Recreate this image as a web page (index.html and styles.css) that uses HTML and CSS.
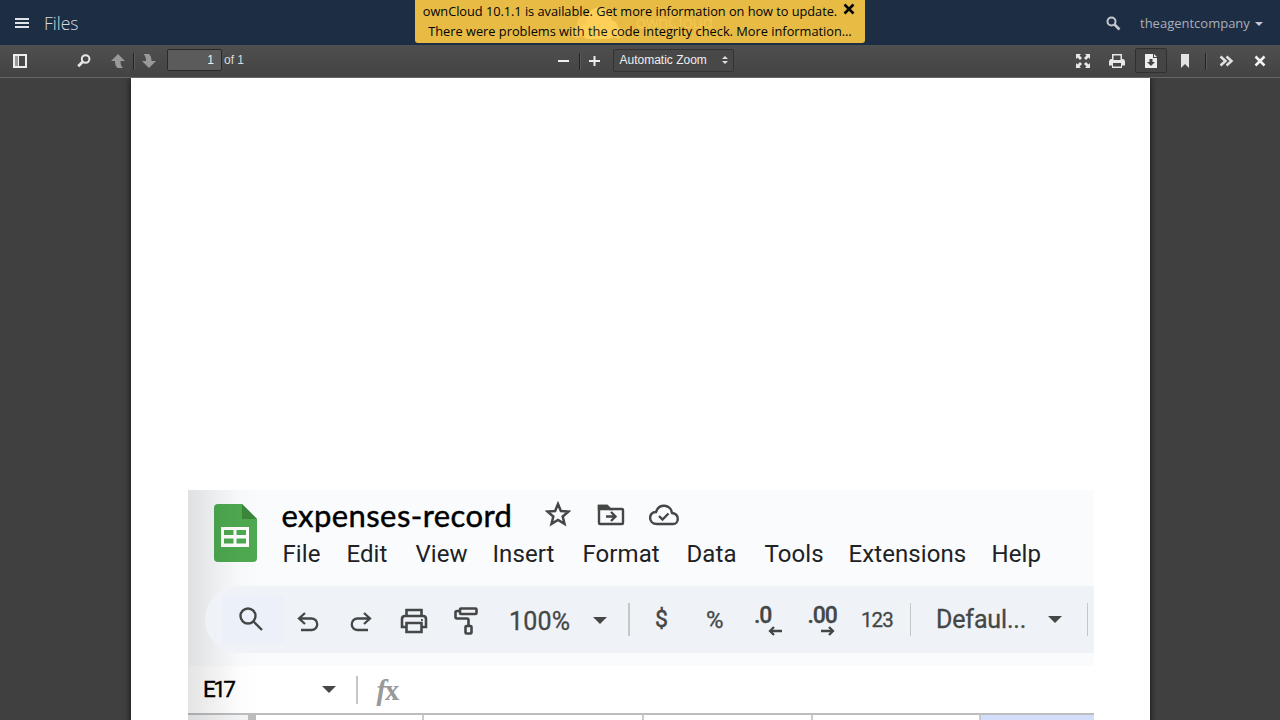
FILE: index.html
```html
<!DOCTYPE html>
<html lang="en">
<head>
<meta charset="utf-8">
<title>Files - ownCloud</title>
<link rel="stylesheet" href="styles.css">
</head>
<body>
<header class="topbar">
  <div class="topbar-left">
    <svg class="burger" width="14" height="10" viewBox="0 0 14 10" fill="#dfe3e8"><path d="M0 0h14v2H0zM0 4h14v2H0zM0 8h14v2H0z"/></svg>
    <span class="app-name">Files</span>
  </div>
  <div class="brand">
    <svg width="54" height="34" viewBox="0 0 54 34" fill="#fff"><g opacity=".75"><circle cx="7" cy="26" r="6"/><circle cx="14" cy="17" r="7"/><circle cx="48" cy="27" r="5.500"/></g><circle cx="29" cy="14" r="12.500"/><circle cx="19" cy="25" r="8"/><circle cx="39" cy="23" r="9.500"/><rect x="16" y="22" width="26" height="11" rx="4"/></svg>
    <span class="brand-name">ownCloud</span>
  </div>
  <div class="topbar-right">
    <svg class="top-search" width="15" height="15" viewBox="0 0 15 15" fill="none" stroke="#c3c8cf"><circle cx="5.500" cy="5.500" r="4" stroke-width="2"/><path d="M8.500 8.500l5 5" stroke-width="2.600"/></svg>
    <span class="user">theagentcompany</span>
    <span class="caret"></span>
  </div>
  <div class="notice">
    <div class="notice-row first">ownCloud 10.1.1 is available. Get more information on how to update.<svg class="notice-close" width="12" height="12" viewBox="0 0 12 12" stroke="#000" stroke-width="2.600"><path d="M1.500 1.500l9 9M10.500 1.500l-9 9"/></svg></div>
    <div class="notice-row">There were problems with the code integrity check. More information…</div>
  </div>
</header>
<nav class="toolbar">
  <div class="tools tools-left">
    <svg class="i-side" width="16" height="16" viewBox="0 0 16 16"><path d="M1 1h14v14H1zM3 3v10h10V3z" fill="#eee" fill-rule="evenodd"/><path d="M3 3h3v10H3z" fill="#999"/><path d="M6 3h1v10H6z" fill="#eee"/></svg>
    <svg class="i-find" width="16" height="16" viewBox="0 0 16 16" fill="none" stroke="#e6e6e6"><circle cx="9.600" cy="6" r="3.800" stroke-width="2"/><path d="M7 8.500L2.200 13.200" stroke-width="2.800"/></svg>
    <svg class="i-up" width="16" height="16" viewBox="0 0 16 16" fill="#999"><path d="M8 1L1 8h4c0 3 .5 5 2.500 7H13c-2-2-2.500-4-2.500-7H15z"/></svg>
    <span class="sep"></span>
    <svg class="i-down" width="16" height="16" viewBox="0 0 16 16" fill="#999"><path d="M8 15L1 8h4c0-3-.5-5-2.500-7H8c2 2 2.500 4 2.500 7H15z"/></svg>
    <span class="page-no">1</span><span class="page-of">of 1</span>
  </div>
  <div class="tools">
    <svg width="16" height="16" viewBox="0 0 16 16" fill="#eee"><path d="M3 7h11v2H3z"/></svg>
    <span class="sep zoom-sep"></span>
    <svg class="i-plus" width="16" height="16" viewBox="0 0 16 16" fill="#eee"><path d="M2 7h4.500V3h2v4H13v2H8.500v4h-2V9H2z"/></svg>
    <span class="scale">Automatic Zoom<svg width="6" height="8" viewBox="0 0 6 8" fill="#ddd"><path d="M0 3l3-3 3 3zM0 5h6L3 8z"/></svg></span>
  </div>
  <div class="tools tools-right">
    <svg width="16" height="16" viewBox="0 0 16 16" fill="#e8e8e8"><path d="M1 1h5L4.500 2.500 7 5 5 7 2.500 4.500 1 6zM15 1v5l-1.500-1.500L11 7 9 5l2.500-2.500L10 1zM1 15v-5l1.500 1.500L5 9l2 2-2.500 2.500L6 15zM15 15h-5l1.500-1.500L9 11l2-2 2.500 2.500L15 10z"/></svg>
    <svg width="16" height="16" viewBox="0 0 16 16"><path d="M3 1h10v5h1.500L16 8v4.500h-3V15H3v-2.500H0V8l1.500-2H3zM4.500 2.500V7h7V2.500zM4 10v3.500h8V10z" fill="#e8e8e8" fill-rule="evenodd"/></svg>
    <span class="boxed"><svg width="16" height="16" viewBox="0 0 16 16"><path d="M2 1h8v4h4v10H2zM11 1l3 3h-3zM6.500 6v3H4l4 4 4-4H9.500V6z" fill="#eee" fill-rule="evenodd"/></svg></span>
    <svg width="16" height="16" viewBox="0 0 16 16" fill="#e2e2e2"><path d="M4 1h8v14l-4-4-4 4z"/></svg>
    <span class="sep"></span>
    <svg width="16" height="16" viewBox="0 0 16 16" fill="none" stroke="#e2e2e2" stroke-width="2.500"><path d="M1.500 3.500l5 4.500-5 4.500M7.500 3.500l5 4.500-5 4.500"/></svg>
    <svg class="i-close" width="16" height="16" viewBox="0 0 16 16" stroke="#f2f2f2" stroke-width="2.500"><path d="M2.500 3.500l9 9M11.500 3.500l-9 9"/></svg>
  </div>
</nav>
<main class="viewer">
  <section class="page">
    <article class="sheet">
      <div class="sheet-head">
        <svg class="sheet-logo" width="43" height="58" viewBox="0 0 43 58"><path d="M4 0h24l15 15v39a4 4 0 0 1-4 4H4a4 4 0 0 1-4-4V4a4 4 0 0 1 4-4z" fill="#4ea950"/><path d="M28 0l15 15H28z" fill="#3b8539"/><path d="M7 23h28v20H7zM10 26v5h9.500v-5zM22.500 26v5H32v-5zM10 34.500v5h9.500v-5zM22.500 34.500v5H32v-5z" fill="#fff" fill-rule="evenodd"/></svg>
        <div class="sheet-info">
          <div class="title-row">
            <span class="title">expenses-record</span>
            <svg class="i-star" width="26" height="26" viewBox="0 0 26 26" fill="none" stroke="#444746" stroke-width="2.500"><path d="M13 3l2.900 7 7.500.6-5.700 4.900 1.800 7.400-6.500-4-6.500 4 1.800-7.400-5.700-4.900 7.500-.6z"/></svg>
            <svg class="i-folder" width="28" height="22" viewBox="0 0 28 22" fill="none" stroke="#444746" stroke-width="2.400"><path d="M2 2h8l3 3h12q1 0 1 1v13q0 1-1 1H3q-1 0-1-1z"/><path d="M2 2h8l3 3H2z" fill="#444746"/><path d="M9 12.500h9M14 8l4.500 4.500L14 17"/></svg>
            <svg class="i-cloud" width="30" height="22" viewBox="0 0 30 22" fill="none" stroke="#444746" stroke-width="2.400"><path d="M8 20c-9 0-9-12-1-12C10-1 22 0 23 9c8 1 7 11 1 11z"/><path d="M10 12l3.500 3.500 6-6"/></svg>
          </div>
          <div class="menu"><span>File</span><span>Edit</span><span>View</span><span>Insert</span><span>Format</span><span>Data</span><span>Tools</span><span>Extensions</span><span>Help</span></div>
        </div>
      </div>
      <div class="pill">
        <div class="search-cell"><svg width="26" height="26" viewBox="0 0 26 26" fill="none" stroke="#444746" stroke-width="2.400"><circle cx="10" cy="10" r="7.500"/><path d="M15.500 15.500l8.500 8.500"/></svg></div>
        <svg class="i-undo" width="22" height="20" viewBox="0 0 22 20" fill="none" stroke="#444746" stroke-width="2.300"><path d="M8 1L2 6.500 8 12M2 6.500h12.500a5.700 5.700 0 0 1 0 11.500H4"/></svg>
        <svg class="i-redo" width="22" height="20" viewBox="0 0 22 20" fill="none" stroke="#444746" stroke-width="2.300"><path d="M14 1l6 5.500-6 5.500M20 6.500H7.500a5.700 5.700 0 0 0 0 11.500H18"/></svg>
        <svg class="i-print" width="28" height="26" viewBox="0 0 28 26" fill="none" stroke="#444746" stroke-width="2.600"><path d="M6.500 8V2h15v6M6.500 19H2v-8q0-3 3-3h18q3 0 3 3v8h-4.500M6.500 15h15v9h-15z"/><path d="M21 12h1.800" stroke-width="1.800"/></svg>
        <svg class="i-paint" width="24" height="28" viewBox="0 0 24 28" fill="none" stroke="#444746" stroke-width="2.600"><rect x="6" y="1.500" width="16.500" height="5.500" rx="1"/><path d="M6 4H3q-1.500 0-1.500 1.500V10q0 1.500 1.500 1.500h10q1.500 0 1.500 1.500v6"/><rect x="11.500" y="19" width="6" height="7.500" rx="1"/></svg>
        <span class="percent">100%</span><i class="arrow a-zoom"></i><i class="bar"></i>
        <span class="dollar">$</span><span class="pct">%</span>
        <span class="dec"><b>.0</b><svg width="14" height="10" viewBox="0 0 14 10" fill="none" stroke="#444746" stroke-width="2.300"><path d="M14 5H2M6 1L2 5l4 4"/></svg></span>
        <span class="dec"><b>.00</b><svg width="14" height="10" viewBox="0 0 14 10" fill="none" stroke="#444746" stroke-width="2.300"><path d="M0 5h12M8 1l4 4-4 4"/></svg></span>
        <span class="num">123</span><i class="bar"></i>
        <span class="font">Defaul...</span><i class="arrow"></i><i class="bar b-three"></i>
      </div>
      <div class="formula"><span class="cell-ref">E17</span><i class="arrow"></i><i class="bar b-fx"></i><span class="fx"><em>f</em>x</span></div>
      <div class="cols"><span class="corner"></span><span></span><span></span><span></span><span></span><span class="selected"></span></div>
    </article>
  </section>
</main>
</body>
</html>
```
FILE: styles.css
```css
* { box-sizing: border-box; }
body { margin: 0; width: 1280px; height: 720px; overflow: hidden; display: flex; flex-direction: column; font-family: "Open Sans", sans-serif; background: #404040; }
svg { display: block; flex: none; }

.topbar { position: relative; height: 45px; flex: none; display: grid; grid-template-columns: 570px 1fr 174px; align-items: center; background: #1d2d44; }
.topbar-left { display: flex; align-items: center; padding-left: 15px; }
.app-name { margin-left: 15px; font-size: 17.5px; font-weight: 300; color: #d5dae0; line-height: 44px; }
.brand { display: flex; align-items: center; gap: 12px; }
.brand-name { margin-top: -3px; color: #ccd0d6; font-weight: 300; font-size: 17px; }
.topbar-right { display: flex; align-items: center; }
.user { margin-left: 19px; width: 111px; font-size: 13px; line-height: 46px; color: #a9b0ba; white-space: nowrap; }
.caret { margin: 2px 0 0 4px; border: 4px solid transparent; border-top-color: #c3c8cf; border-bottom: 0; }
.notice { position: absolute; left: 415px; top: 0; width: 450px; height: 43px; padding-top: 1px; background: #fecb45; opacity: .9; border-radius: 0 0 3px 3px; color: #000; font-size: 12.8px; line-height: 20px; text-align: center; white-space: nowrap; }
.first { letter-spacing: -.04px; padding-right: 2px; }
.notice-close { display: inline-block; margin-left: 6px; vertical-align: 1px; }

.toolbar { height: 33px; flex: none; display: grid; grid-template-columns: 555px 1fr 205px; align-items: center; background: linear-gradient(#4f4f4f, #434343); border-bottom: 1px solid #777; font-family: "Liberation Sans", sans-serif; font-size: 12px; color: #d9d9d9; }
.tools { display: flex; align-items: center; height: 32px; }
.sep { width: 2px; height: 17px; background: #222; border-right: 1px solid #5a5a5a; }
.i-side { margin-left: 12px; }
.i-find { margin-left: 48px; }
.i-up { margin: 0 7px 0 18px; }
.i-down { margin: 0 10px 0 6px; }
.page-no { width: 55px; height: 22px; margin-top: -2px; border: 1px solid #292929; border-radius: 2px; background: #5b5b5b; text-align: right; padding-right: 7px; line-height: 21px; color: #eee; }
.page-of { margin: -2px 0 0 2px; }
.zoom-sep { margin-left: 8px; }
.i-plus { margin-left: 6px; }
.scale { display: flex; align-items: center; justify-content: space-between; width: 121px; height: 23px; margin: -2px 0 0 10px; padding: 0 5px 0 5.5px; border: 1px solid #343434; border-radius: 2px; background: #484848; color: #eee; }
.tools-right > svg:first-child { margin-right: 18px; }
.boxed { width: 32px; height: 25px; margin: -1px 10px 0; display: grid; place-items: center; border: 1px solid #303030; border-radius: 2px; background: #454545; }
.tools-right .sep { margin: 0 12px; }
.i-close { margin-left: 18px; }

.viewer { flex: 1; min-height: 0; padding-left: 131px; margin-top: -1px; overflow: hidden; background: #404040; border-top: 1px solid #666; }
.page { width: 1019px; height: 700px; padding: 412px 0 0 57px; background: #fff; box-shadow: 0 0 7px #111; }
.sheet { position: relative; width: 906px; height: 240px; background: #fff; color: #202124; overflow: hidden; }
.sheet::before { content: ""; position: absolute; left: 0; top: 0; width: 72px; height: 230px; background: linear-gradient(90deg, rgba(0,0,0,.105), rgba(0,0,0,.055) 38%, rgba(0,0,0,.012) 70%, transparent); }
.sheet-head { height: 96px; display: flex; background: #f9fbfd; padding: 14px 0 0 26px; box-shadow: 0 80px 0 #f9fbfd; }
.sheet-info { margin-left: 24.5px; }
.title-row { display: flex; height: 26px; margin-top: -2px; align-items: center; }
.title { width: 263px; font-family: Lato, sans-serif; font-size: 31px; letter-spacing: .42px; color: #000; line-height: 24px; -webkit-text-stroke: .45px #000; white-space: nowrap; }
.i-star { margin-top: -2px; }
.i-folder { margin: -1px 0 0 26px; }
.i-cloud { margin: -1px 0 0 24.5px; }
.menu { display: grid; grid-template-columns: 64px 69px 77px 90px 104px 78px 84px 143px 60px; margin: 11px 0 0 1px; font-family: Roboto, sans-serif; font-size: 24px; line-height: 30px; letter-spacing: .08px; white-space: nowrap; }
.pill { position: relative; height: 67px; margin-left: 17px; display: flex; align-items: center; border-radius: 34px 0 0 34px; background: #eff3f8; color: #444746; font-family: Roboto, sans-serif; white-space: nowrap; }
.search-cell { width: 62px; height: 47px; margin-left: 17px; padding: 10px 0 0 16px; background: #ebf0f9; border-radius: 3px; }
.i-undo { margin: 5px 0 0 13px; }
.i-redo { margin: 5px 0 0 31px; }
.i-print { margin: 3px 0 0 28px; }
.i-paint { margin: 3px 0 0 26px; }
.percent { width: 84px; margin: 4px 0 0 31px; font-size: 25px; letter-spacing: .2px; -webkit-text-stroke: .3px #444746; }
.arrow { flex: none; border: 7px solid transparent; border-top-color: #444746; border-bottom: 0; }
.bar { flex: none; width: 1.5px; height: 33px; background: #c4c7c5; }
.a-zoom { margin: 2px 21.5px 0 -.5px; }
.dollar { width: 51px; margin-left: 25.5px; font-size: 23px; -webkit-text-stroke: .5px #444746; }
.pct { width: 48px; font-size: 24px; -webkit-text-stroke: .3px #444746; }
.dec { width: 53.5px; height: 40px; padding-top: 4px; font-size: 23px; line-height: 24px; letter-spacing: -1.1px; }
.dec b { display: block; font-weight: 500; height: 22px; -webkit-text-stroke: .3px #444746; }
.dec svg { margin-left: 13.5px; }
.num { width: 48.5px; font-size: 20.5px; letter-spacing: -.9px; -webkit-text-stroke: .3px #444746; }
.font { width: 112px; margin-left: 25px; font-size: 25px; letter-spacing: -.15px; -webkit-text-stroke: .3px #444746; }
.b-three { margin-left: 24.5px; }
.formula { position: relative; height: 60px; padding: 12px 0 0 15px; display: flex; align-items: center; }
.cell-ref { width: 119px; font-family: Roboto, sans-serif; font-size: 22.5px; letter-spacing: -2.6px; color: #000; -webkit-text-stroke: .35px #000; }
.b-fx { height: 28px; margin: 2px 0 0 20px; }
.fx { margin: 2px 0 0 19px; font-family: "Liberation Serif", serif; font-size: 29px; letter-spacing: -1.5px; font-weight: bold; color: #999; line-height: 28px; }
.cols { display: grid; grid-template-columns: 68px 168px 220px 169px 168px 1fr; height: 20px; border-top: 2px solid #bdbdbd; }
.cols span { border-right: 2px solid #cbcbcb; }
.cols .corner { border-right: 8px solid #bdbdbd; background: #f3f4f5; }
.cols .selected { background: #d3defa; border: 0; }
```
